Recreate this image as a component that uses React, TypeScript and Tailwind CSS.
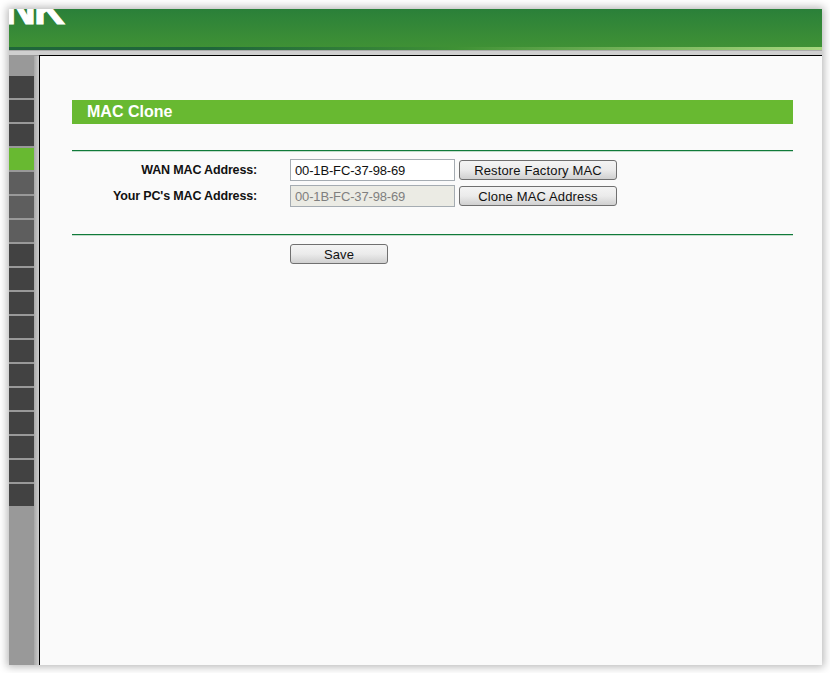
const items = Array.from({ length: 18 }, (_, i) => i);

function itemColor(i: number) {
  if (i === 3) return "bg-[#68b931]";
  if (i >= 4 && i <= 6) return "bg-[#5e5e5e]";
  return "bg-[#424242]";
}

function Btn({ w, children }: { w: string; children: string }) {
  return (
    <button
      className={`${w} h-[20px] rounded-[3px] border border-[#707070] bg-gradient-to-b from-[#f4f4f4] via-[#ebebeb] to-[#d0d0d0] text-[13px] tracking-[0.14px] leading-[17px] text-[#111] text-center`}
    >
      {children}
    </button>
  );
}

export default function App() {
  return (
    <div
      className="w-[830px] h-[673px] bg-white pl-[9px] pr-[8px] pt-[9px] pb-[8px] overflow-hidden"
      style={{ fontFamily: '"Liberation Sans", Arial, sans-serif' }}
    >
      <div className="w-[813px] h-[656px] flex flex-col shadow-[0_0_8px_2px_rgba(0,0,0,0.28)]">
        <div className="relative h-[38px] overflow-hidden bg-gradient-to-b from-[#2a8039] to-[#3f9135]">
          <span className="absolute left-[-4px] top-[-20px] text-[42px] leading-[42px] font-bold text-white tracking-[-2px] [-webkit-text-stroke:1px_white] [transform:scaleX(1.02)] origin-left">
            NK
          </span>
        </div>
        <div className="h-[3px] bg-gradient-to-r from-[#1f663a] from-[25%] via-[#3f9135] via-[55%] to-[#a8d880]" />
        <div className="h-[5px] bg-[#cfcfcf] border-t border-[#ababab]" />
        <div className="h-px bg-[#999999] pl-[30px]">
          <div className="h-px bg-black" />
        </div>
        <div className="flex flex-1 min-h-0">
          <div className="w-[25px] bg-[#999999] pt-[20px] flex flex-col gap-[2px]">
            {items.map((i) => (
              <div key={i} className={`h-[22px] ${itemColor(i)}`} />
            ))}
          </div>
          <div className="w-[5px] bg-gradient-to-r from-[#a8a8a8] to-[#cfcfcf]" />
          <div className="w-px bg-black" />
          <main className="flex-1 bg-[#fafafa] pl-[32px] pr-[29px] pt-[44px] text-[12px]">
            <h1 className="h-[24px] bg-[#68b931] pl-[15px] text-[16px] leading-[23px] font-bold text-white">
              MAC Clone
            </h1>
            <div className="mt-[26px] h-[85px] border-y border-[#107a3a] pt-[7px] shadow-[0_1px_0_#c3dccb,inset_0_1px_0_#c3dccb]">
              <div className="flex items-center h-[24px]">
                <label className="w-[185px] text-right font-bold text-[12.5px] tracking-[-0.16px] text-[#111]">WAN MAC Address:</label>
                <input
                  readOnly
                  value="00-1B-FC-37-98-69"
                  className="ml-[33px] w-[165px] h-[22px] border border-[#a5acb2] bg-white pl-[4px] text-[13px] tracking-[-0.15px] text-[#111] outline-none"
                />
                <div className="ml-[4px] flex">
                  <Btn w="w-[158px]">Restore Factory MAC</Btn>
                </div>
              </div>
              <div className="flex items-center h-[24px] mt-[2px]">
                <label className="w-[185px] text-right font-bold text-[12.5px] tracking-[-0.16px] text-[#111]">Your PC's MAC Address:</label>
                <input
                  disabled
                  value="00-1B-FC-37-98-69"
                  className="ml-[33px] w-[165px] h-[22px] border border-[#a5acb2] bg-[#ebebe4] pl-[4px] text-[13px] tracking-[-0.15px] text-[#7f7f7f] outline-none"
                />
                <div className="ml-[4px] flex">
                  <Btn w="w-[158px]">Clone MAC Address</Btn>
                </div>
              </div>
            </div>
            <div className="mt-[9px] pl-[218px] flex">
              <Btn w="w-[98px]">Save</Btn>
            </div>
          </main>
        </div>
      </div>
    </div>
  );
}
